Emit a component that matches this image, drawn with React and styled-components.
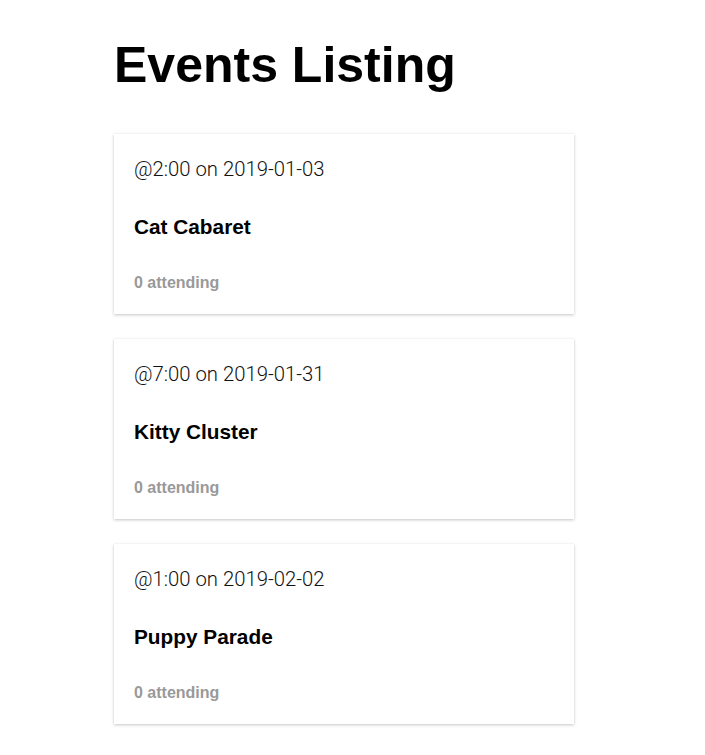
import React from "react";
import styled, { createGlobalStyle } from "styled-components";

const Global = createGlobalStyle`
  html, body { margin: 0; padding: 0; background: #fff; }
  body { font-family: "Liberation Sans", Arial, Helvetica, sans-serif; color: #000; }
`;

const Page = styled.main`
  padding: 35px 0 30px 114px;
  width: 460px;
`;

const Title = styled.h1`
  margin: 0 0 39px 0;
  font-size: 50px;
  line-height: 60px;
  font-weight: 700;
`;

const List = styled.div`
  display: flex;
  flex-direction: column;
  gap: 25px;
`;

const Card = styled.article`
  display: flex;
  flex-direction: column;
  gap: 33px;
  padding: 23px 20px 21px;
  background: #fff;
  box-shadow: 0 1px 3px rgba(0, 0, 0, 0.22), 0 0 1px rgba(0, 0, 0, 0.06);
`;

const When = styled.p`
  margin: 0;
  font-family: "Roboto", "Liberation Sans", sans-serif;
  font-weight: 300;
  font-size: 20.3px;
  line-height: 24px;
  color: #111;
`;

const Name = styled.h3`
  margin: 0;
  font-size: 20.8px;
  line-height: 26px;
  font-weight: 700;
`;

const Attending = styled.p`
  margin: 0;
  font-size: 16px;
  line-height: 20px;
  font-weight: 700;
  color: #999;
`;

const events = [
  { time: "2:00", date: "2019-01-03", name: "Cat Cabaret", attending: 0 },
  { time: "7:00", date: "2019-01-31", name: "Kitty Cluster", attending: 0 },
  { time: "1:00", date: "2019-02-02", name: "Puppy Parade", attending: 0 },
];

export default function App() {
  return (
    <>
      <Global />
      <Page>
        <Title>Events Listing</Title>
        <List>
          {events.map((e) => (
            <Card key={e.name}>
              <When>@{e.time} on {e.date}</When>
              <Name>{e.name}</Name>
              <Attending>{e.attending} attending</Attending>
            </Card>
          ))}
        </List>
      </Page>
    </>
  );
}
